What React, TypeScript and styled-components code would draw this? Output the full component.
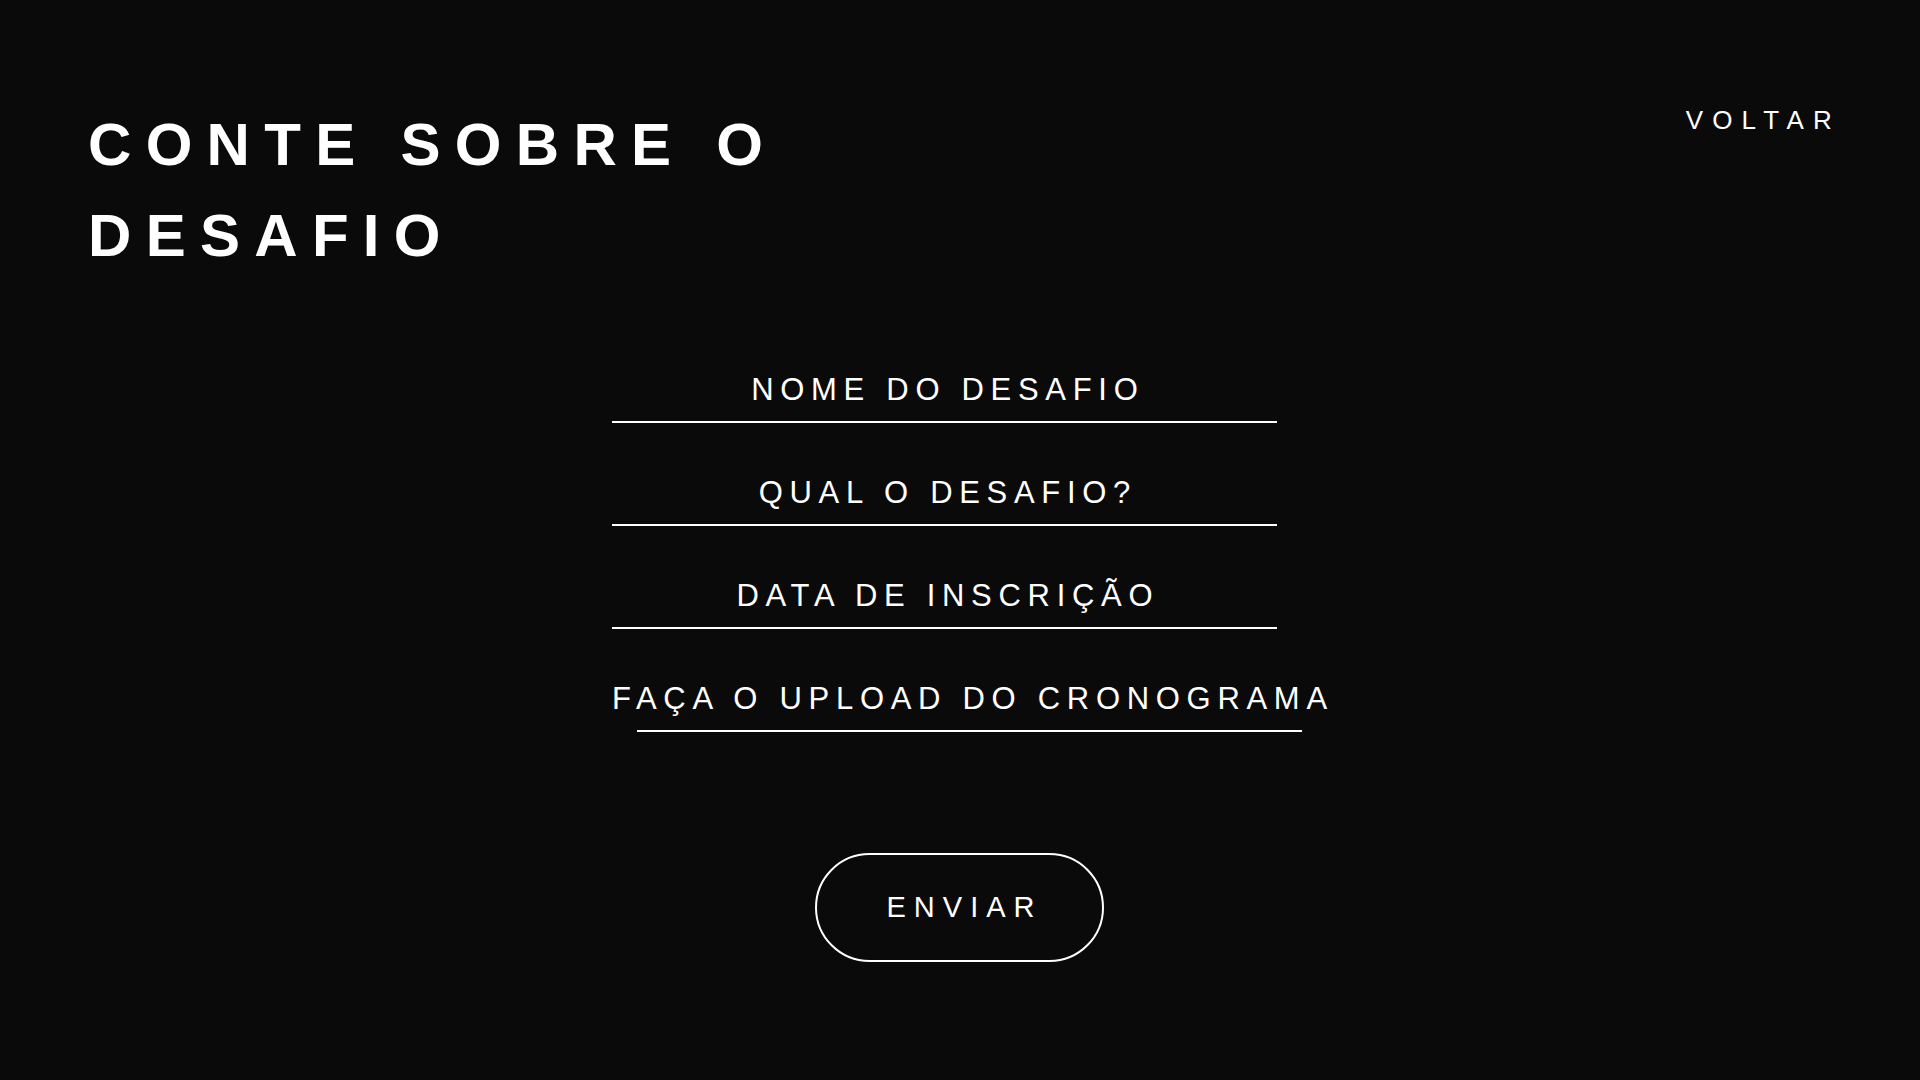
import React from 'react';
import styled, { createGlobalStyle } from 'styled-components';

const GlobalStyle = createGlobalStyle`
  * { box-sizing: border-box; }
  body {
    margin: 0;
    background: #0a0a0a;
    color: #ffffff;
    font-family: "Liberation Sans", Arial, sans-serif;
  }
`;

const Page = styled.div`
  min-height: 1080px;
  padding: 99px 79px 0 88px;
  display: flex;
  flex-direction: column;
`;

const Header = styled.header`
  display: flex;
  justify-content: space-between;
  align-items: flex-start;
`;

const Title = styled.h1`
  margin: 0;
  max-width: 770px;
  font-size: 60px;
  font-weight: 700;
  line-height: 91px;
  letter-spacing: 14.3px;
  text-transform: uppercase;
`;

const BackLink = styled.a`
  margin-top: 6px;
  color: #ffffff;
  text-decoration: none;
  font-size: 26px;
  line-height: 30px;
  letter-spacing: 9.2px;
  cursor: pointer;
`;

const Form = styled.form`
  width: 696px;
  margin: 91px 0 0 524px;
  display: flex;
  flex-direction: column;
  align-items: flex-start;
  gap: 52px;
`;

const Field = styled.label`
  display: inline-flex;
  flex-direction: column;
  align-items: center;
  min-width: 665px;
  cursor: text;
`;

const FieldLabel = styled.span`
  font-size: 31px;
  line-height: 36px;
  letter-spacing: 6.7px;
  margin-right: -6.7px;
  white-space: nowrap;
`;

const Underline = styled.span`
  display: block;
  width: 665px;
  height: 2px;
  margin-top: 13px;
  background: #ffffff;
`;

const SubmitButton = styled.button`
  width: 289px;
  height: 109px;
  margin: 121px 0 0 727px;
  padding: 0 0 0 10px;
  border: 2px solid #ffffff;
  border-radius: 55px;
  background: transparent;
  color: #ffffff;
  font-family: "Liberation Sans", Arial, sans-serif;
  font-size: 29px;
  letter-spacing: 8px;
  cursor: pointer;
`;

const fields = [
  'NOME DO DESAFIO',
  'QUAL O DESAFIO?',
  'DATA DE INSCRIÇÃO',
  'FAÇA O UPLOAD DO CRONOGRAMA',
];

export default function App() {
  return (
    <>
      <GlobalStyle />
      <Page>
        <Header>
          <Title>Conte sobre o desafio</Title>
          <BackLink>VOLTAR</BackLink>
        </Header>
        <Form onSubmit={(e) => e.preventDefault()}>
          {fields.map((f) => (
            <Field key={f}>
              <FieldLabel>{f}</FieldLabel>
              <Underline />
            </Field>
          ))}
        </Form>
        <SubmitButton type="button">ENVIAR</SubmitButton>
      </Page>
    </>
  );
}
